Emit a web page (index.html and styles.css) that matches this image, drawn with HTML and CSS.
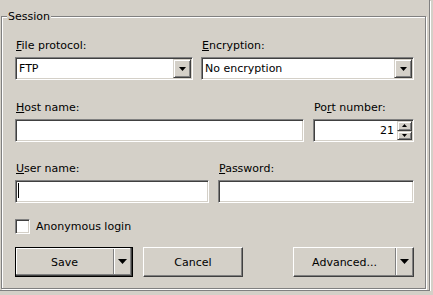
FILE: index.html
```html
<!DOCTYPE html>
<html lang="en">
<head>
  <meta charset="UTF-8" />
  <title>Login - Session</title>
  <link rel="stylesheet" href="styles.css">
</head>
<body>

  <!-- PANEL -->
  <div class="panel">
    <div class="group">
      <span class="legend">Session</span>

      <!-- protocolo / cifrado -->
      <div class="row row-proto">
        <div class="cell">
          <label class="lbl"><u>F</u>ile protocol:</label>
          <div class="field combo">
            <span class="value">FTP</span>
            <span class="drop">
              <svg width="7" height="4" viewBox="0 0 7 4"><path d="M0 0h7L3.5 4z" fill="#000"/></svg>
            </span>
          </div>
        </div>
        <div class="cell">
          <label class="lbl"><u>E</u>ncryption:</label>
          <div class="field combo">
            <span class="value">No encryption</span>
            <span class="drop">
              <svg width="7" height="4" viewBox="0 0 7 4"><path d="M0 0h7L3.5 4z" fill="#000"/></svg>
            </span>
          </div>
        </div>
      </div>

      <!-- host / puerto -->
      <div class="row row-host">
        <div class="cell">
          <label class="lbl" for="host"><u>H</u>ost name:</label>
          <div class="field"><input type="text" id="host" /></div>
        </div>
        <div class="cell">
          <label class="lbl" for="port">Po<u>r</u>t number:</label>
          <div class="field">
            <input type="text" id="port" class="num" value="21" />
            <span class="spin">
              <span class="spin-btn">
                <svg width="5" height="3" viewBox="0 0 5 3"><path d="M2.5 0L5 3H0z" fill="#000"/></svg>
              </span>
              <span class="spin-btn">
                <svg width="5" height="3" viewBox="0 0 5 3"><path d="M0 0h5L2.5 3z" fill="#000"/></svg>
              </span>
            </span>
          </div>
        </div>
      </div>

      <!-- usuario / clave -->
      <div class="row row-user">
        <div class="cell">
          <label class="lbl" for="user"><u>U</u>ser name:</label>
          <div class="field">
            <input type="text" id="user" />
            <span class="caret"></span>
          </div>
        </div>
        <div class="cell">
          <label class="lbl" for="pass"><u>P</u>assword:</label>
          <div class="field"><input type="password" id="pass" /></div>
        </div>
      </div>

      <!-- anonimo -->
      <div class="check-row">
        <span class="check"></span>
        <span>Anonymous login</span>
      </div>

      <!-- botones -->
      <div class="buttons">
        <div class="btn split default">
          <span class="btn-main">Save</span>
          <span class="btn-arrow">
            <svg width="9" height="5" viewBox="0 0 9 5"><path d="M0 0h9L4.5 5z" fill="#000"/></svg>
          </span>
        </div>
        <div class="btn cancel"><span class="btn-main">Cancel</span></div>
        <div class="btn split advanced">
          <span class="btn-main">Advanced...</span>
          <span class="btn-arrow">
            <svg width="9" height="5" viewBox="0 0 9 5"><path d="M0 0h9L4.5 5z" fill="#000"/></svg>
          </span>
        </div>
      </div>
    </div>
  </div>

</body>
</html>
```

FILE: styles.css
```css
/* Reset */
* {
  margin: 0; padding: 0; box-sizing: border-box;
}
html, body {
  background: #d4d0c8;
  color: #000;
  font-family: 'DejaVu Sans', sans-serif;
  font-size: 11px;
  line-height: 13px;
}
/* PANEL EXTERIOR */
.panel {
  width: 430px;
  height: 291px;
  padding: 16px 0 0 1px;
  border-right: 1px solid #808080;
  border-bottom: 1px solid #808080;
  box-shadow: 1px 1px 0 #fff;
}
/* GROUP BOX (etched) */
.group {
  position: relative;
  width: 425px;
  height: 273px;
  padding: 22px 11px 11px 13px;
  border: 1px solid #808080;
  box-shadow: 1px 1px 0 #fff, inset 1px 1px 0 #fff;
}
.legend {
  position: absolute;
  top: -7px;
  left: 5px;
  padding: 0 1px;
  background: #d4d0c8;
}
/* FILAS */
.row {
  display: grid;
}
.row-proto {
  grid-template-columns: 178px 1fr;
  column-gap: 8px;
}
.row-host {
  grid-template-columns: 1fr 101px;
  column-gap: 9px;
  margin-top: 21px;
}
.row-user {
  grid-template-columns: 194px 1fr;
  column-gap: 9px;
  margin-top: 20px;
}
.cell {
  display: flex;
  flex-direction: column;
  gap: 5px;
}
.lbl {
  display: block;
  height: 13px;
  padding-left: 1px;
  white-space: nowrap;
}
/* CAMPOS HUNDIDOS */
.field {
  position: relative;
  display: flex;
  height: 23px;
  padding: 1px;
  background: #fff;
  border: 1px solid;
  border-color: #808080 #fff #fff #808080;
  box-shadow: inset 1px 1px 0 #404040, inset -1px -1px 0 #d4d0c8;
}
.field input {
  flex: 1;
  min-width: 0;
  border: none;
  outline: none;
  background: transparent;
  font: inherit;
  color: #000;
  padding: 0 3px;
}
.field input.num {
  text-align: right;
  padding-right: 3px;
}
.caret {
  position: absolute;
  top: 2px;
  left: 2px;
  width: 1px;
  height: 15px;
  background: #000;
}
/* COMBO */
.combo .value {
  flex: 1;
  display: flex;
  align-items: center;
  padding-left: 2px;
  white-space: nowrap;
}
.drop {
  width: 18px;
  display: flex;
  align-items: center;
  justify-content: center;
  background: #d4d0c8;
  border: 1px solid;
  border-color: #d4d0c8 #404040 #404040 #d4d0c8;
  box-shadow: inset 1px 1px 0 #fff, inset -1px -1px 0 #808080;
}
.drop svg {
  margin: 1px 0 0 0;
}
/* SPINNER */
.spin {
  width: 15px;
  display: flex;
  flex-direction: column;
}
.spin-btn {
  flex: 1;
  display: flex;
  align-items: center;
  justify-content: center;
  background: #d4d0c8;
  border: 1px solid;
  border-color: #d4d0c8 #404040 #404040 #d4d0c8;
  box-shadow: inset 1px 1px 0 #fff, inset -1px -1px 0 #808080;
}
/* CHECKBOX */
.check-row {
  display: flex;
  align-items: center;
  gap: 6px;
  height: 15px;
  margin-top: 16px;
}
.check {
  width: 15px;
  height: 15px;
  background: #fff;
  border: 1px solid;
  border-color: #808080 #fff #fff #808080;
  box-shadow: inset 1px 1px 0 #404040, inset -1px -1px 0 #d4d0c8;
}
/* BOTONES */
.buttons {
  display: flex;
  margin-top: 13px;
  gap: 10px;
}
.btn {
  display: flex;
  height: 30px;
  background: #d4d0c8;
  border: 1px solid;
  border-color: #fff #404040 #404040 #fff;
  box-shadow: inset -1px -1px 0 #808080;
  user-select: none;
}
.btn.default {
  width: 118px;
  border-color: #000;
  box-shadow: inset -1px -1px 0 #404040, inset -2px -2px 0 #808080, inset 1px 1px 0 #fff;
}
.btn.cancel {
  width: 100px;
}
.btn.advanced {
  width: 121px;
  margin-left: auto;
}
.btn-main {
  flex: 1;
  display: flex;
  align-items: center;
  justify-content: center;
}
.btn-arrow {
  width: 18px;
  display: flex;
  align-items: center;
  justify-content: center;
  border-left: 1px solid #808080;
  box-shadow: inset 1px 0 0 #fff;
  margin-bottom: 1px;
}
.default .btn-arrow {
  margin-bottom: 2px;
  margin-right: 1px;
  margin-top: 1px;
}
```
